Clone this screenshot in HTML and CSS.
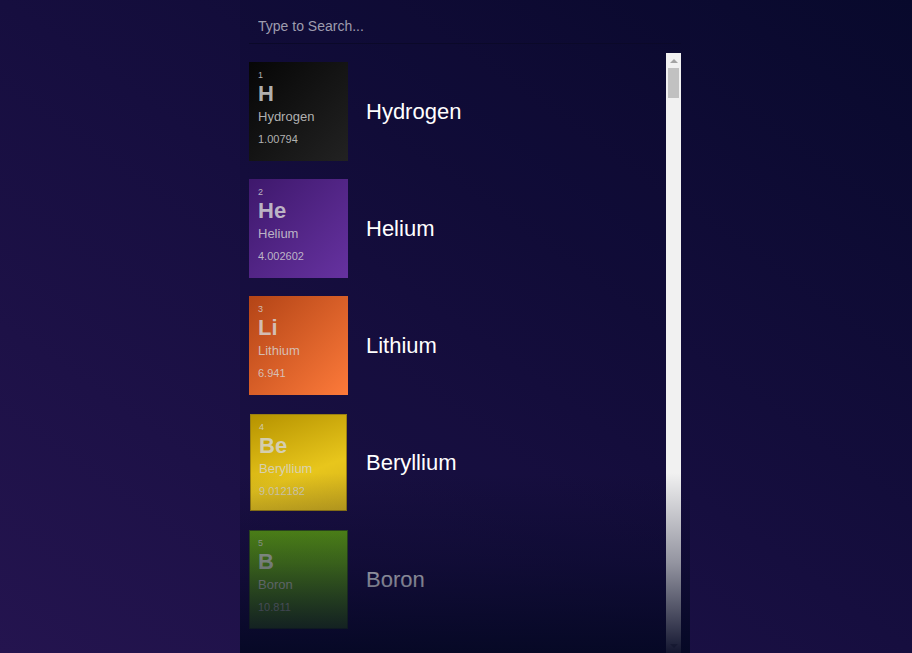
FILE: index.html
```html
<!DOCTYPE html>
<html>
<head>
<meta charset="utf-8">
<link rel="stylesheet" href="styles.css">
</head>
<body>
<div class="app">
  <div class="search">
    <input class="search-input" type="text" placeholder="Type to Search...">
  </div>
  <div class="list-wrap">
    <div class="list">
      <div class="item">
        <div class="tile tile-h">
          <span class="num">1</span>
          <span class="sym">H</span>
          <span class="tname">Hydrogen</span>
          <span class="mass">1.00794</span>
        </div>
        <div class="name">Hydrogen</div>
      </div>
      <div class="item">
        <div class="tile tile-he">
          <span class="num">2</span>
          <span class="sym">He</span>
          <span class="tname">Helium</span>
          <span class="mass">4.002602</span>
        </div>
        <div class="name">Helium</div>
      </div>
      <div class="item">
        <div class="tile tile-li">
          <span class="num">3</span>
          <span class="sym">Li</span>
          <span class="tname">Lithium</span>
          <span class="mass">6.941</span>
        </div>
        <div class="name">Lithium</div>
      </div>
      <div class="item">
        <div class="tile tile-be">
          <span class="num">4</span>
          <span class="sym">Be</span>
          <span class="tname">Beryllium</span>
          <span class="mass">9.012182</span>
        </div>
        <div class="name">Beryllium</div>
      </div>
      <div class="item">
        <div class="tile tile-b">
          <span class="num">5</span>
          <span class="sym">B</span>
          <span class="tname">Boron</span>
          <span class="mass">10.811</span>
        </div>
        <div class="name">Boron</div>
      </div>
    </div>
    <div class="scrollbar">
      <div class="sb-btn"><span class="arrow-up"></span></div>
      <div class="sb-track"><div class="sb-thumb"></div></div>
      <div class="sb-btn"><span class="arrow-down"></span></div>
    </div>
  </div>
  <div class="fade"></div>
</div>
</body>
</html>
```

FILE: styles.css
```css
html, body {
  margin: 0;
  height: 653px;
  overflow: hidden;
}
body {
  background: linear-gradient(to top right, #24144f 0%, #160e3f 50%, #08092c 100%);
  font-family: "Liberation Sans", Arial, sans-serif;
  display: flex;
  justify-content: center;
  padding-left: 18px;
  box-sizing: border-box;
}
.app {
  position: relative;
  width: 450px;
  height: 653px;
  padding: 0 9px;
  box-sizing: border-box;
  display: flex;
  flex-direction: column;
  background: rgba(8, 8, 40, 0.12);
}
.search {
  height: 43px;
  border-bottom: 1px solid #0b0929;
  display: flex;
  align-items: center;
}
.search-input {
  width: 100%;
  background: transparent;
  border: none;
  outline: none;
  padding: 0 0 0 9px;
  margin-top: 8px;
  font-family: "Liberation Sans", Arial, sans-serif;
  font-size: 14px;
  color: #ddd;
}
.search-input::placeholder {
  color: #9e9cae;
}
.list-wrap {
  margin-top: 9px;
  height: 600px;
  display: flex;
}
.list {
  flex: 1;
  overflow: hidden;
}
.scrollbar {
  width: 15px;
  flex-shrink: 0;
  background: #f1f1f1;
  display: flex;
  flex-direction: column;
}
.sb-btn {
  height: 15px;
  display: flex;
  align-items: center;
  justify-content: center;
}
.arrow-up {
  width: 0;
  height: 0;
  border-left: 4px solid transparent;
  border-right: 4px solid transparent;
  border-bottom: 4px solid #a3a3a3;
}
.arrow-down {
  width: 0;
  height: 0;
  border-left: 4px solid transparent;
  border-right: 4px solid transparent;
  border-top: 4px solid #a3a3a3;
}
.sb-track {
  flex: 1;
  padding: 0 2px;
}
.sb-thumb {
  height: 30px;
  background: #c1c1c1;
}
.item {
  height: 117px;
  padding-top: 9px;
  box-sizing: border-box;
  display: flex;
  align-items: flex-start;
}
.tile {
  width: 99px;
  height: 99px;
  box-sizing: border-box;
  padding: 8px 0 0 9px;
  display: flex;
  flex-direction: column;
  color: rgba(214, 214, 214, 0.82);
  flex-shrink: 0;
}
.num {
  font-size: 9px;
  line-height: 10px;
}
.sym {
  font-size: 22px;
  font-weight: bold;
  line-height: 26px;
  margin-top: 1px;
}
.tname {
  font-size: 13px;
  line-height: 16px;
  margin-top: 2px;
}
.mass {
  font-size: 11px;
  line-height: 13px;
  margin-top: 8px;
}
.name {
  margin-left: 18px;
  height: 99px;
  display: flex;
  align-items: center;
  font-size: 22px;
  color: #ffffff;
}
.tile-h {
  background: linear-gradient(135deg, #060606 0%, #222222 100%);
}
.tile-he {
  background: linear-gradient(135deg, #3e186c 0%, #6632a0 100%);
}
.tile-li {
  background: linear-gradient(135deg, #b34416 0%, #fd7a3a 100%);
}
.tile-be {
  width: 97px;
  height: 97px;
  margin: 1px 1px 0 1px;
  padding: 7px 0 0 8px;
  border: 1px solid #9a8012;
  background: linear-gradient(160deg, #b69300 0%, #e8c61c 60%, #d2b01c 100%);
}
.tile-b {
  border: 1px solid #34581a;
  padding: 7px 0 0 8px;
  background: linear-gradient(180deg, #62a612 0%, #4a8418 100%);
}
.fade {
  position: absolute;
  left: 0;
  right: 0;
  bottom: 0;
  height: 180px;
  pointer-events: none;
  background: linear-gradient(to bottom, rgba(6, 8, 38, 0) 0%, rgba(6, 8, 38, 0.4) 50%, rgba(5, 8, 36, 0.94) 100%);
}
```
